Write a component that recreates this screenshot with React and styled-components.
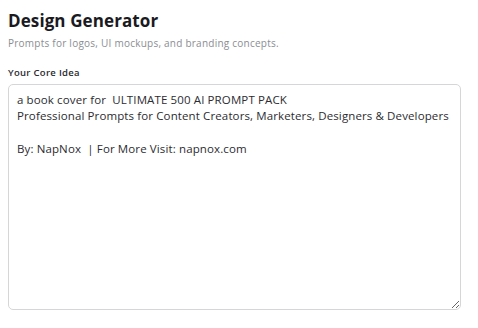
import React, { useState } from 'react'
import styled, { createGlobalStyle } from 'styled-components'

const GlobalStyle = createGlobalStyle`
    html, body {
        margin: 0;
        padding: 0;
        background: #ffffff;
    }
    body {
        font-family: 'Open Sans', 'Liberation Sans', sans-serif;
    }
`

const Main = styled.div`
    width: 453px;
    padding: 10px 8px 0 8px;
    display: flex;
    flex-direction: column;
`
const Title = styled.h1`
    margin: 0;
    font-size: 17px;
    font-weight: 700;
    color: #1a1a1f;
    line-height: 22px;
    letter-spacing: 0.1px;
`
const Subtitle = styled.p`
    margin: 5px 0 0 0;
    font-size: 10px;
    letter-spacing: 0.24px;
    color: #8a8d93;
    line-height: 12px;
`
const Label = styled.label`
    margin-top: 18px;
    font-size: 9.5px;
    letter-spacing: 0.3px;
    font-weight: 600;
    color: #2a2a30;
    line-height: 12px;
`
const IdeaInput = styled.textarea`
    margin-top: 5px;
    box-sizing: border-box;
    width: 453px;
    height: 226px;
    padding: 7px 8px;
    border: 1px solid #d6d6d9;
    border-radius: 5px;
    font-family: inherit;
    font-size: 11.5px;
    letter-spacing: 0.12px;
    line-height: 16.4px;
    color: #2c2c31;
    background: #ffffff;
    outline: none;
    resize: vertical;
`

const initialText = `a book cover for  ULTIMATE 500 AI PROMPT PACK
Professional Prompts for Content Creators, Marketers, Designers & Developers

By: NapNox  | For More Visit: napnox.com`

const App = () => {
    const [idea, setIdea] = useState(initialText)
    return (
        <>
            <GlobalStyle />
            <Main>
                <Title>Design Generator</Title>
                <Subtitle>Prompts for logos, UI mockups, and branding concepts.</Subtitle>
                <Label htmlFor="idea">Your Core Idea</Label>
                <IdeaInput id="idea" value={idea} onChange={(e) => setIdea(e.target.value)} />
            </Main>
        </>
    )
}

export default App
